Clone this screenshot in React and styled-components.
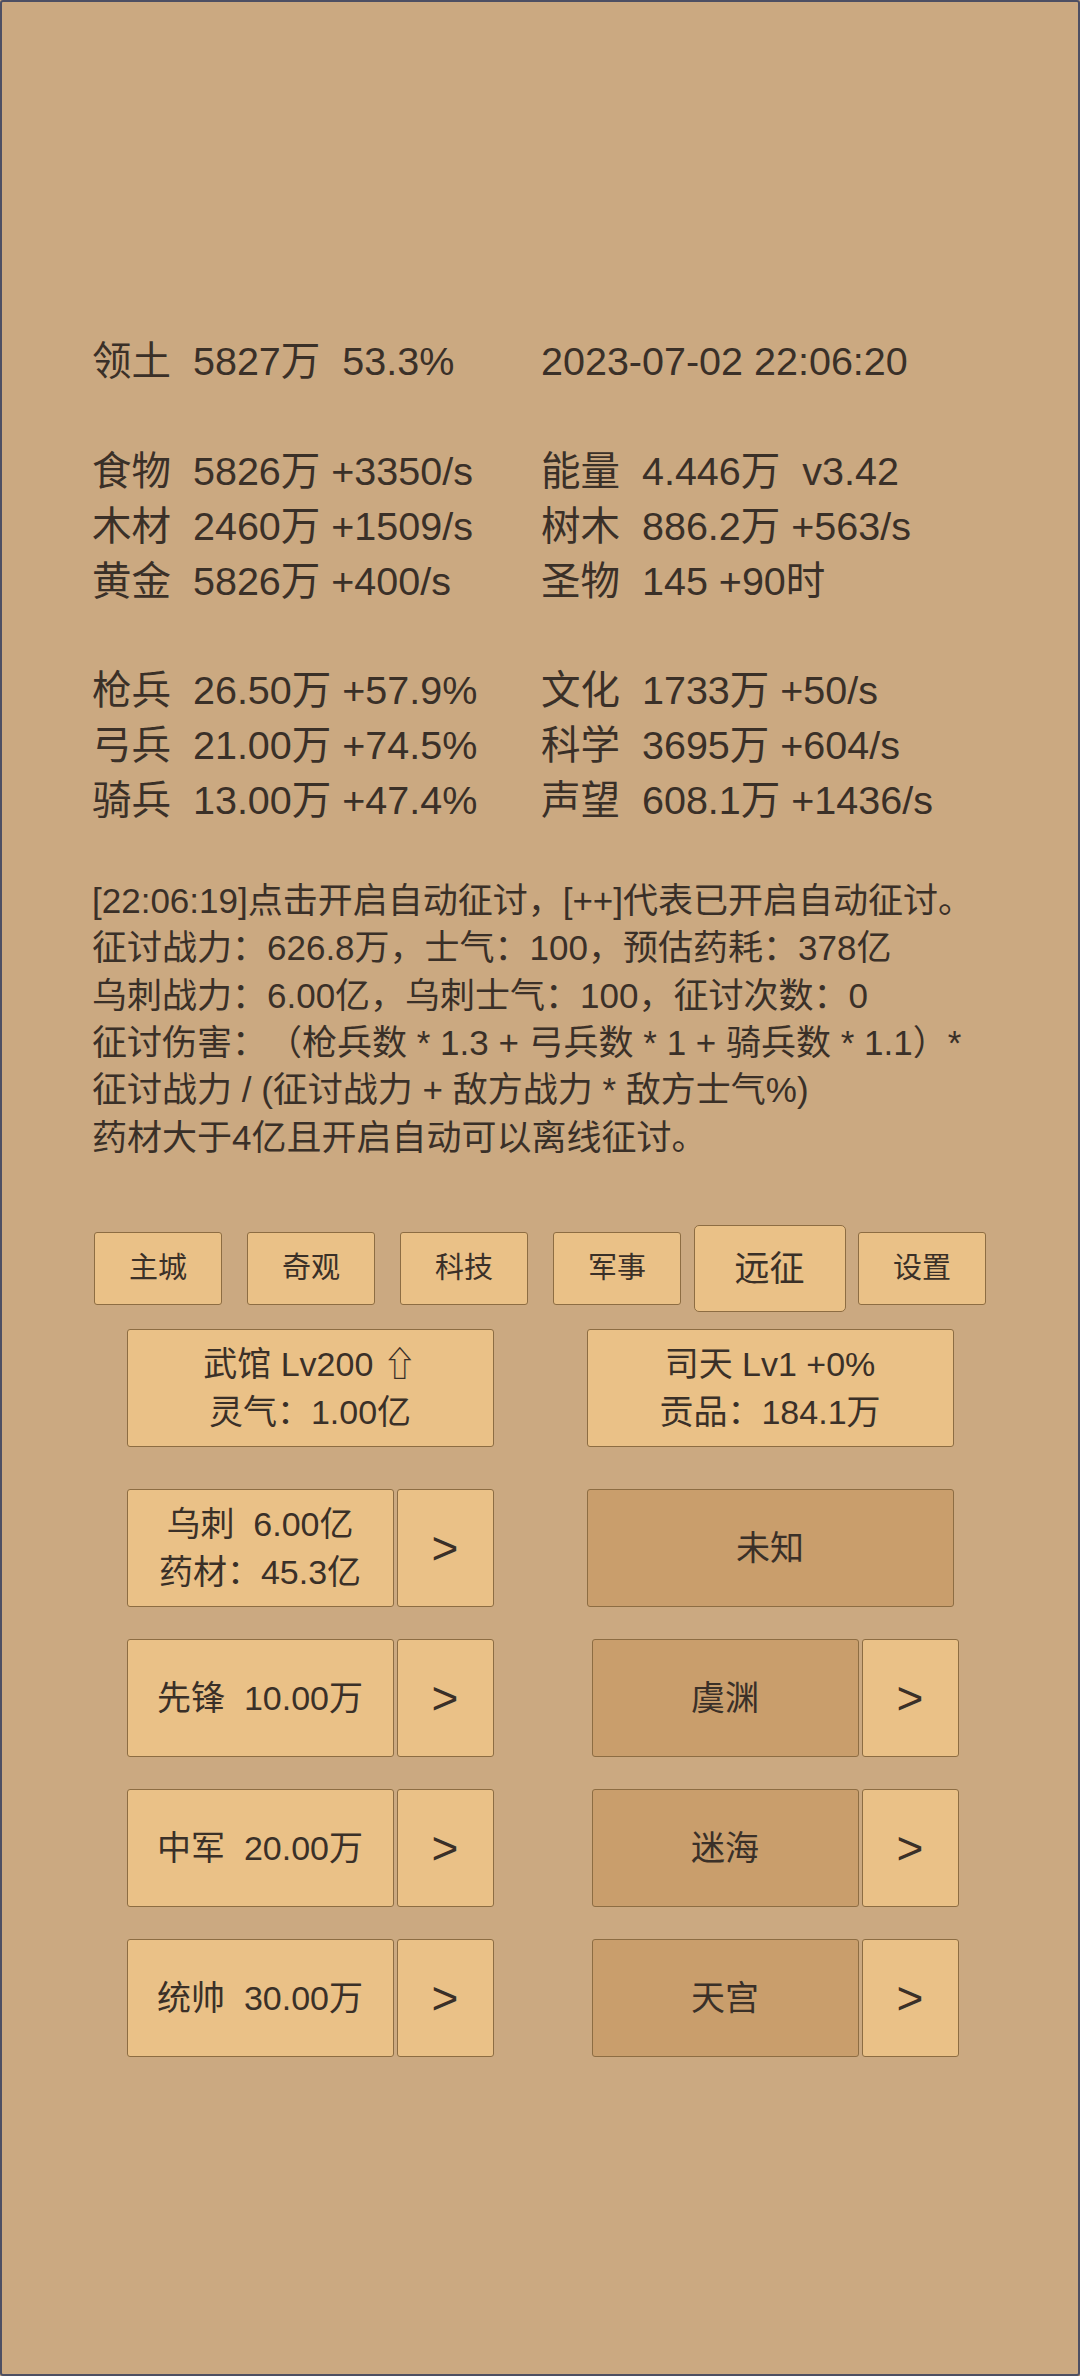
import React from "react";
import styled, { createGlobalStyle } from "styled-components";

const Global = createGlobalStyle`
  html, body { margin: 0; padding: 0; }
  body { background: #cba981; }
  * { box-sizing: border-box; text-spacing-trim: space-all; }
`;

const FONT = `"Liberation Sans", "Noto Sans CJK SC", sans-serif`;

const Page = styled.div`
  min-height: 2376px;
  border: 2px solid #4d4f63;
  border-radius: 3px;
  background: #cba981;
  color: #3a3028;
  font-family: ${FONT};
  padding-top: 332px;
  text-spacing-trim: space-all;
`;

const Stats = styled.div`
  display: grid;
  grid-template-columns: 449px 1fr;
  padding-left: 90px;
  font-size: 39.5px;
  line-height: 54.9px;
  white-space: pre;
`;

const Cell = styled.div`
  height: 54.9px;
`;

const Log = styled.div`
  margin-top: 49px;
  padding-left: 90px;
  font-size: 35px;
  line-height: 47.3px;
  white-space: pre;
`;

const Nav = styled.div`
  margin-top: 64px;
  display: flex;
  align-items: center;
  justify-content: center;
`;

const NavButton = styled.div`
  background: #eac187;
  border: 1px solid #8d6d43;
  border-radius: ${(p) => (p.$active ? "5px" : "3px")};
  font-size: ${(p) => (p.$active ? "35px" : "29px")};
  line-height: ${(p) => (p.$active ? "49px" : "40px")};
  padding: ${(p) => (p.$active ? "18px 40px" : "15.5px 34px")};
  margin: ${(p) => (p.$active ? "0" : "0 12.5px")};
  white-space: nowrap;
`;

const Rows = styled.div`
  width: 827px;
  margin: 17px auto 0;
  display: flex;
  flex-direction: column;
`;

const Row = styled.div`
  display: flex;
  justify-content: space-between;
  margin-top: ${(p) => p.$gap || 0}px;
`;

const Group = styled.div`
  display: flex;
  gap: 3px;
  width: 367px;
  margin-right: ${(p) => (p.$shift ? "-5px" : "0")};
`;

const Box = styled.div`
  flex: 1;
  height: 118px;
  background: ${(p) => (p.$dark ? "#c99e6c" : "#eac187")};
  border: 1px solid #8d6d43;
  border-radius: 3px;
  display: flex;
  flex-direction: column;
  align-items: center;
  justify-content: center;
  font-size: 34px;
  line-height: 48px;
  white-space: pre;
`;

const Arrow = styled.div`
  width: 97px;
  height: 118px;
  background: #eac187;
  border: 1px solid #8d6d43;
  border-radius: 3px;
  display: flex;
  align-items: center;
  justify-content: center;
  font-size: 46px;
  line-height: 1;
`;

const stats = [
  ["领土  5827万  53.3%", "2023-07-02 22:06:20"],
  ["", ""],
  ["食物  5826万 +3350/s", "能量  4.446万  v3.42"],
  ["木材  2460万 +1509/s", "树木  886.2万 +563/s"],
  ["黄金  5826万 +400/s", "圣物  145 +90时"],
  ["", ""],
  ["枪兵  26.50万 +57.9%", "文化  1733万 +50/s"],
  ["弓兵  21.00万 +74.5%", "科学  3695万 +604/s"],
  ["骑兵  13.00万 +47.4%", "声望  608.1万 +1436/s"],
];

const logLines = [
  "[22:06:19]点击开启自动征讨，[++]代表已开启自动征讨。",
  "征讨战力：626.8万，士气：100，预估药耗：378亿",
  "乌刺战力：6.00亿，乌刺士气：100，征讨次数：0",
  "征讨伤害：（枪兵数 * 1.3 + 弓兵数 * 1 + 骑兵数 * 1.1）*",
  "征讨战力 / (征讨战力 + 敌方战力 * 敌方士气%)",
  "药材大于4亿且开启自动可以离线征讨。",
];

const navs = ["主城", "奇观", "科技", "军事", "远征", "设置"];

const troops = [
  ["先锋  10.00万", "虞渊"],
  ["中军  20.00万", "迷海"],
  ["统帅  30.00万", "天宫"],
];

export default function App() {
  return (
    <>
      <Global />
      <Page>
        <Stats>
          {stats.map(([a, b], i) => (
            <React.Fragment key={i}>
              <Cell>{a}</Cell>
              <Cell>{b}</Cell>
            </React.Fragment>
          ))}
        </Stats>
        <Log>
          {logLines.map((l, i) => (
            <div key={i}>{l}</div>
          ))}
        </Log>
        <Nav>
          {navs.map((n) => (
            <NavButton key={n} $active={n === "远征"}>
              {n}
            </NavButton>
          ))}
        </Nav>
        <Rows>
          <Row>
            <Group>
              <Box>
                <div>武馆 Lv200 ⇧</div>
                <div>灵气：1.00亿</div>
              </Box>
            </Group>
            <Group>
              <Box>
                <div>司天 Lv1 +0%</div>
                <div>贡品：184.1万</div>
              </Box>
            </Group>
          </Row>
          <Row $gap={42}>
            <Group>
              <Box>
                <div>乌刺  6.00亿</div>
                <div>药材：45.3亿</div>
              </Box>
              <Arrow>&gt;</Arrow>
            </Group>
            <Group>
              <Box $dark>未知</Box>
            </Group>
          </Row>
          {troops.map(([a, b]) => (
            <Row key={a} $gap={32}>
              <Group>
                <Box>{a}</Box>
                <Arrow>&gt;</Arrow>
              </Group>
              <Group $shift>
                <Box $dark>{b}</Box>
                <Arrow>&gt;</Arrow>
              </Group>
            </Row>
          ))}
        </Rows>
      </Page>
    </>
  );
}
